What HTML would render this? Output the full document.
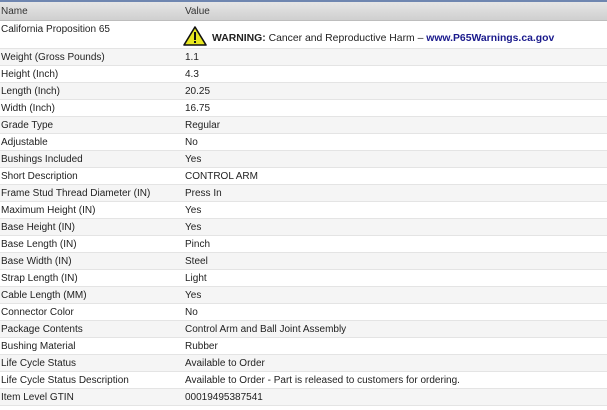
<!DOCTYPE html>
<html><head><style>
body{margin:0;width:607px;height:410px;background:#fff;font-family:"Liberation Sans",sans-serif;font-size:10px;color:#222;overflow:hidden;position:relative}
.top{position:absolute;left:0;top:0;width:607px;height:2px;background:#6f86b0}
.hdr{position:absolute;left:0;top:2px;width:607px;height:18px;background:linear-gradient(#e6e6e6,#cfcfcf);border-bottom:1px solid #bdbdbd}
.r{position:absolute;left:0;width:607px;height:16px;border-bottom:1px solid #e4e4e4}
.g{background:#f5f5f5}
.c1,.c2{position:absolute;top:0;line-height:17px;white-space:nowrap}
.c1{left:1px}.c2{left:185px}
</style></head><body>
<div class="top"></div>
<div class="hdr"><span class="c1" style="line-height:19px;color:#333">Name</span><span class="c2" style="line-height:19px;color:#333">Value</span></div>
<div class="r" style="top:20px;height:28px"><span class="c1" style="line-height:20px">California Proposition 65</span>
<svg style="position:absolute;left:183px;top:6px" width="24" height="20" viewBox="0 0 24 20"><polygon points="12,1 23,19 1,19" fill="#e8e820" stroke="#111" stroke-width="1.6" stroke-linejoin="round"/><rect x="11" y="6" width="2" height="8" fill="#111"/><rect x="11" y="15" width="2" height="2" fill="#111"/></svg>
<span style="position:absolute;left:212px;top:12px;line-height:14px;font-size:10.4px;white-space:nowrap"><b>WARNING:</b> Cancer and Reproductive Harm – <b style="color:#1a1a8c">www.P65Warnings.ca.gov</b></span></div>
<div class="r g" style="top:49px"><span class="c1">Weight (Gross Pounds)</span><span class="c2">1.1</span></div>
<div class="r" style="top:66px"><span class="c1">Height (Inch)</span><span class="c2">4.3</span></div>
<div class="r g" style="top:83px"><span class="c1">Length (Inch)</span><span class="c2">20.25</span></div>
<div class="r" style="top:100px"><span class="c1">Width (Inch)</span><span class="c2">16.75</span></div>
<div class="r g" style="top:117px"><span class="c1">Grade Type</span><span class="c2">Regular</span></div>
<div class="r" style="top:134px"><span class="c1">Adjustable</span><span class="c2">No</span></div>
<div class="r g" style="top:151px"><span class="c1">Bushings Included</span><span class="c2">Yes</span></div>
<div class="r" style="top:168px"><span class="c1">Short Description</span><span class="c2">CONTROL ARM</span></div>
<div class="r g" style="top:185px"><span class="c1">Frame Stud Thread Diameter (IN)</span><span class="c2">Press In</span></div>
<div class="r" style="top:202px"><span class="c1">Maximum Height (IN)</span><span class="c2">Yes</span></div>
<div class="r g" style="top:219px"><span class="c1">Base Height (IN)</span><span class="c2">Yes</span></div>
<div class="r" style="top:236px"><span class="c1">Base Length (IN)</span><span class="c2">Pinch</span></div>
<div class="r g" style="top:253px"><span class="c1">Base Width (IN)</span><span class="c2">Steel</span></div>
<div class="r" style="top:270px"><span class="c1">Strap Length (IN)</span><span class="c2">Light</span></div>
<div class="r g" style="top:287px"><span class="c1">Cable Length (MM)</span><span class="c2">Yes</span></div>
<div class="r" style="top:304px"><span class="c1">Connector Color</span><span class="c2">No</span></div>
<div class="r g" style="top:321px"><span class="c1">Package Contents</span><span class="c2">Control Arm and Ball Joint Assembly</span></div>
<div class="r" style="top:338px"><span class="c1">Bushing Material</span><span class="c2">Rubber</span></div>
<div class="r g" style="top:355px"><span class="c1">Life Cycle Status</span><span class="c2">Available to Order</span></div>
<div class="r" style="top:372px"><span class="c1">Life Cycle Status Description</span><span class="c2">Available to Order - Part is released to customers for ordering.</span></div>
<div class="r g" style="top:389px"><span class="c1">Item Level GTIN</span><span class="c2">00019495387541</span></div>
</body></html>
